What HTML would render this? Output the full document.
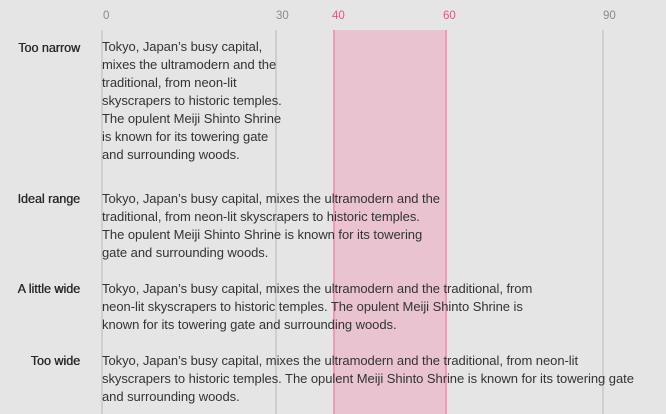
<!DOCTYPE html>
<html><head><meta charset="utf-8"><style>
body{margin:0;width:666px;height:414px;background:#e5e5e5;position:relative;overflow:hidden;font-family:"Liberation Sans",sans-serif;}
.v{position:absolute;top:30px;bottom:0;width:2px;background:#cfcfcf}
.n{position:absolute;top:10px;font-size:11.5px;color:#8a8a8a}
.p{color:#ef4f88}
.band{position:absolute;left:333px;width:113px;top:30px;bottom:0;background:#e9c4d0}
.lab{position:absolute;right:586px;font-size:12.5px;color:#2a2a2a;white-space:nowrap;text-shadow:0.4px 0 0 #2a2a2a}
.t{position:absolute;left:102px;font-size:13px;line-height:18px;color:#333;white-space:nowrap;letter-spacing:-0.05px}
</style></head><body>
<div class="band"></div>
<div class="v" style="left:101px"></div>
<div class="v" style="left:275px"></div>
<div class="v" style="left:333px;background:#f19ab7"></div>
<div class="v" style="left:445px;background:#f19ab7"></div>
<div class="v" style="left:602px"></div>
<div class="n" style="left:103px">0</div>
<div class="n" style="left:276px">30</div>
<div class="n p" style="left:332px">40</div>
<div class="n p" style="left:443px">60</div>
<div class="n" style="left:603px">90</div>

<div class="lab" style="top:41px">Too narrow</div>
<div class="t" style="top:38px">Tokyo, Japan’s busy capital,<br>mixes the ultramodern and the<br>traditional, from neon-lit<br>skyscrapers to historic temples.<br>The opulent Meiji Shinto Shrine<br>is known for its towering gate<br>and surrounding woods.</div>

<div class="lab" style="top:192px">Ideal range</div>
<div class="t" style="top:190px">Tokyo, Japan’s busy capital, mixes the ultramodern and the<br>traditional, from neon-lit skyscrapers to historic temples.<br>The opulent Meiji Shinto Shrine is known for its towering<br>gate and surrounding woods.</div>

<div class="lab" style="top:282px">A little wide</div>
<div class="t" style="top:280px">Tokyo, Japan’s busy capital, mixes the ultramodern and the traditional, from<br>neon-lit skyscrapers to historic temples. The opulent Meiji Shinto Shrine is<br>known for its towering gate and surrounding woods.</div>

<div class="lab" style="top:354px">Too wide</div>
<div class="t" style="top:352px">Tokyo, Japan’s busy capital, mixes the ultramodern and the traditional, from neon-lit<br>skyscrapers to historic temples. The opulent Meiji Shinto Shrine is known for its towering gate<br>and surrounding woods.</div>
</body></html>
